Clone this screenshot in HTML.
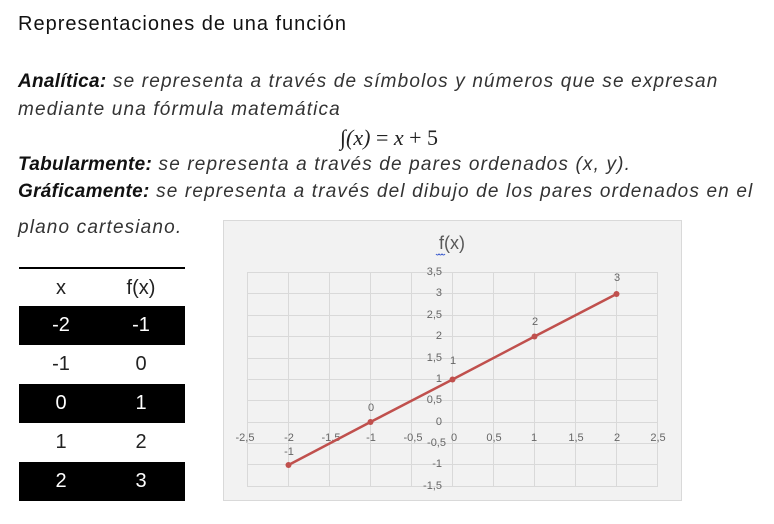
<!DOCTYPE html>
<html><head><meta charset="utf-8"><style>
body{margin:0;width:774px;height:524px;background:#fff;position:relative;overflow:hidden;font-family:"Liberation Sans",sans-serif;color:#222}
.t{position:absolute;left:18px;white-space:nowrap;font-style:italic;font-size:19px;letter-spacing:1.15px;color:#333}
.t b{color:#111;letter-spacing:0.3px}
.row{position:absolute;left:19px;width:166px;height:39px;font-size:20px;line-height:39px}
.row span{position:absolute;width:40px;text-align:center}
.blk{background:#000;color:#fff}
</style></head><body>
<div style="position:absolute;left:18px;top:13px;font-size:20px;letter-spacing:1px;color:#111">Representaciones de una función</div>
<div class="t" style="top:71px"><b>Analítica:</b> se representa a través de símbolos y números que se expresan</div>
<div class="t" style="top:99px">mediante una fórmula matemática</div>
<div style="position:absolute;left:340px;top:125px;font-family:'Liberation Serif',serif;font-size:22px;font-style:italic;color:#222">∫(x) <span style="font-style:normal">= </span>x <span style="font-style:normal">+ 5</span></div>
<div class="t" style="top:154px"><b>Tabularmente:</b> se representa a través de pares ordenados (x, y).</div>
<div class="t" style="top:181px"><b>Gráficamente:</b> se representa a través del dibujo de los pares ordenados en el</div>
<div class="t" style="top:217px">plano cartesiano.</div>

<div style="position:absolute;left:19px;top:267px;width:166px;height:2px;background:#000"></div>
<div class="row" style="top:269px"><span style="left:22px">x</span><span style="left:102px">f(x)</span></div>
<div class="row blk" style="top:306px"><span style="left:22px">-2</span><span style="left:102px">-1</span></div>
<div class="row" style="top:345px"><span style="left:22px">-1</span><span style="left:102px">0</span></div>
<div class="row blk" style="top:384px"><span style="left:22px">0</span><span style="left:102px">1</span></div>
<div class="row" style="top:423px"><span style="left:22px">1</span><span style="left:102px">2</span></div>
<div class="row blk" style="top:462px"><span style="left:22px">2</span><span style="left:102px">3</span></div>

<svg style="position:absolute;left:0;top:0" width="774" height="524">
<rect x="223.5" y="220.5" width="458" height="280" fill="#f2f2f2" stroke="#d9d9d9"/>
<text x="452" y="249" font-size="18" fill="#595959" text-anchor="middle" font-family="Liberation Sans">f(x)</text>
<path d="M436 254 q1.5 2 3 0 q1.5 2 3 0 q1.5 2 3 0" stroke="#3355cc" fill="none" stroke-width="1"/>
<g stroke="#d9d9d9" stroke-width="1">
<path d="M247.5 272v214M288.5 272v214M329.5 272v214M370.5 272v214M411.5 272v214M452.5 272v214M493.5 272v214M534.5 272v214M575.5 272v214M616.5 272v214M657.5 272v214"/>
<path d="M247 272.5h411M247 293.5h411M247 315.5h411M247 336.5h411M247 358.5h411M247 379.5h411M247 400.5h411M247 422.5h411M247 443.5h411M247 464.5h411M247 486.5h411"/>
</g>
<g font-size="11" fill="#666" font-family="Liberation Sans" text-anchor="end">
<text x="442" y="275">3,5</text><text x="442" y="296">3</text><text x="442" y="318">2,5</text><text x="442" y="339">2</text><text x="442" y="361">1,5</text><text x="442" y="382">1</text><text x="442" y="403">0,5</text><text x="442" y="425">0</text><text x="446" y="446">-0,5</text><text x="442" y="467">-1</text><text x="442" y="489">-1,5</text>
</g>
<g font-size="11" fill="#666" font-family="Liberation Sans" text-anchor="middle">
<text x="245" y="441">-2,5</text><text x="289" y="441">-2</text><text x="331" y="441">-1,5</text><text x="371" y="441">-1</text><text x="413" y="441">-0,5</text><text x="454" y="441">0</text><text x="494" y="441">0,5</text><text x="534" y="441">1</text><text x="576" y="441">1,5</text><text x="617" y="441">2</text><text x="658" y="441">2,5</text>
<text x="289" y="455">-1</text><text x="371" y="411">0</text><text x="453" y="364">1</text><text x="535" y="325">2</text><text x="617" y="281">3</text>
</g>
<polyline points="288.5,465 370.5,422 452.5,379.5 534.5,336.5 616.5,294" fill="none" stroke="#c0504d" stroke-width="2.5"/>
<g fill="#c0504d"><circle cx="288.5" cy="465" r="3"/><circle cx="370.5" cy="422" r="3"/><circle cx="452.5" cy="379.5" r="3"/><circle cx="534.5" cy="336.5" r="3"/><circle cx="616.5" cy="294" r="3"/></g>
</svg>
</body></html>
